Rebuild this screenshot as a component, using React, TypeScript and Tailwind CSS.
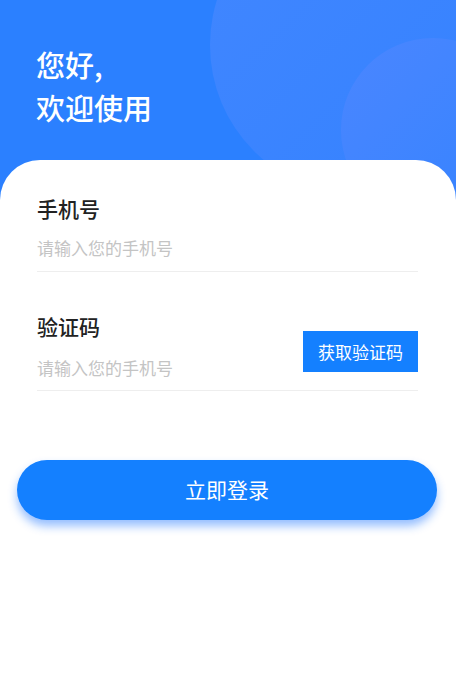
export default function App() {
  return (
    <div
      className="relative min-h-[699px] w-full overflow-hidden bg-white"
      style={{ fontFamily: '"Noto Sans CJK SC", "Noto Sans", sans-serif' }}
    >
      {/* Header */}
      <div className="relative h-[200px] overflow-hidden bg-[#2b80ff]">
        <div className="absolute left-[210px] top-[-105px] h-[300px] w-[300px] rounded-full bg-gradient-to-br from-[#4487ff] to-[#3482ff] opacity-90" />
        <div className="absolute left-[341px] top-[38px] h-[184px] w-[184px] rounded-full bg-gradient-to-br from-[#4a86ff] to-[#3383ff]" />
        <div className="relative px-[36px] pt-[43px] text-[29px] font-medium leading-[43px] text-white">
          <p>您好,</p>
          <p>欢迎使用</p>
        </div>
      </div>

      {/* Form card */}
      <div className="relative -mt-[40px] rounded-t-[40px] bg-white pl-[37px] pr-[38px] pt-[34px]">
        <div className="border-b border-[#eeeeee] pb-[11px]">
          <p className="text-[21px] font-medium leading-[28px] text-[#222]">手机号</p>
          <input
            className="mt-[14px] h-[24px] w-full text-[17px] leading-[24px] text-[#333] outline-none placeholder:text-[#c4c4c4]"
            placeholder="请输入您的手机号"
          />
        </div>

        <div className="mt-[40px] flex items-end border-b border-[#eeeeee] pb-[10px]">
          <div className="flex-1">
            <p className="text-[21px] font-medium leading-[28px] text-[#222]">验证码</p>
            <input
              className="mt-[16px] h-[24px] w-full text-[17px] leading-[24px] text-[#333] outline-none placeholder:text-[#c4c4c4]"
              placeholder="请输入您的手机号"
            />
          </div>
          <button className="mb-[8px] h-[41px] w-[115px] bg-[#1480ff] text-[17px] text-white">
            获取验证码
          </button>
        </div>
      </div>

      <div className="pl-[17px] pr-[19px] pt-[69px]">
        <button className="h-[60px] w-full rounded-full bg-[#1480ff] text-[21px] text-white shadow-[0_6px_10px_rgba(20,110,255,0.45)]">
          立即登录
        </button>
      </div>
    </div>
  );
}
